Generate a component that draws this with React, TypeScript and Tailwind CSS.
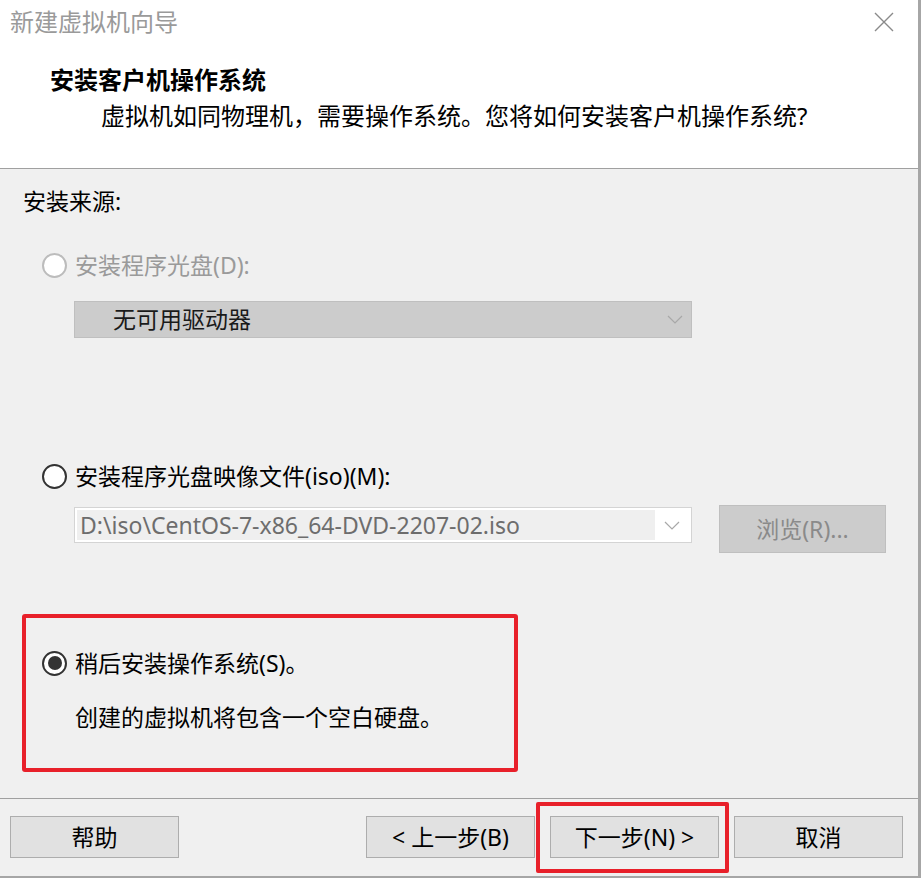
import React, { useState } from 'react';

const FONT = { fontFamily: '"Noto Sans", "Noto Sans CJK SC", sans-serif' };

const Radio = ({ checked, disabled }: { checked?: boolean; disabled?: boolean }) => (
  <span
    className={`w-[25px] h-[25px] rounded-full border-[2.5px] bg-white flex items-center justify-center shrink-0 ${
      disabled ? 'border-[#bcbcbc]' : 'border-[#333333]'
    }`}
  >
    {checked && <span className="w-[14px] h-[14px] rounded-full bg-[#333333]" />}
  </span>
);

const Chevron = () => (
  <svg width="16" height="9" viewBox="0 0 16 9" fill="none" stroke="#a8a8a8" strokeWidth="1.2">
    <path d="M1 1l7 7 7-7" />
  </svg>
);

const FooterButton = ({ children }: { children: React.ReactNode }) => (
  <button className="w-[169px] h-[42px] bg-[#e1e1e1] border border-[#adadad] text-[23px] text-black flex items-center justify-center leading-none">
    {children}
  </button>
);

export default function App() {
  const [source, setSource] = useState<'disc' | 'iso' | 'later'>('later');

  return (
    <div className="w-[922px] h-[881px] bg-white" style={FONT}>
      <div className="w-[921px] border-r-[3px] border-b-[2px] border-[#a6a6a6] flex flex-col">
        {/* 标题区 */}
        <div className="h-[169px] bg-white border-b border-[#a0a0a0] flex flex-col">
          <div className="h-[44px] flex items-center justify-between pl-[10px] pr-[24px]">
            <span className="text-[24px] text-[#9a9a9a] leading-none">新建虚拟机向导</span>
            <svg width="20" height="20" viewBox="0 0 20 20" stroke="#8a8a8a" strokeWidth="1.4">
              <path d="M1 1l18 18M19 1L1 19" />
            </svg>
          </div>
          <div className="pt-[18px] pl-[50px] text-[24px] font-bold leading-[36px] text-black">安装客户机操作系统</div>
          <div className="pl-[101px] text-[24px] leading-[36px] text-black">
            虚拟机如同物理机，需要操作系统。您将如何安装客户机操作系统?
          </div>
        </div>

        {/* 主体 */}
        <div className="h-[630px] bg-[#f0f0f0] border-b border-[#a0a0a0] pl-[23px] pt-[14px] flex flex-col text-[23px]">
          <div className="leading-[36px] text-black">安装来源:</div>

          <div className="mt-[28px] ml-[19px] h-[36px] flex items-center gap-[8px]">
            <Radio disabled />
            <span className="text-[#9a9a9a]">安装程序光盘(D):</span>
          </div>
          <div className="mt-[18px] ml-[51px] w-[618px] h-[37px] bg-[#cccccc] border border-[#bfbfbf] flex items-center justify-between pl-[38px] pr-[8px]">
            <span className="text-[#1a1a1a]">无可用驱动器</span>
            <Chevron />
          </div>

          <div
            className="mt-[120px] ml-[19px] h-[36px] flex items-center gap-[8px] cursor-default"
            onClick={() => setSource('iso')}
          >
            <Radio checked={source === 'iso'} />
            <span className="text-black">安装程序光盘映像文件(iso)(M):</span>
          </div>
          <div className="mt-[11px] ml-[51px] flex items-start gap-[27px]">
            <div className="mt-[2px] w-[618px] h-[36px] bg-white border border-[#d4d4d4] p-[2px] flex items-center">
              <div className="w-[578px] h-full bg-[#efefef] flex items-center pl-[3px] text-[#6d6d6d] whitespace-nowrap overflow-hidden">
                D:\iso\CentOS-7-x86_64-DVD-2207-02.iso
              </div>
              <div className="flex-1 flex justify-center">
                <Chevron />
              </div>
            </div>
            <button className="w-[167px] h-[48px] bg-[#cccccc] border border-[#bfbfbf] text-[#8a8a8a] flex items-center justify-center">
              浏览(R)...
            </button>
          </div>

          <div className="mt-[61px] ml-[-1px] w-[496px] h-[158px] border-[4px] border-[#e8202a] rounded-[3px] pl-[16px] pt-[27px] flex flex-col">
            <div className="h-[36px] flex items-center gap-[8px] cursor-default" onClick={() => setSource('later')}>
              <Radio checked={source === 'later'} />
              <span className="text-black">稍后安装操作系统(S)。</span>
            </div>
            <div className="mt-[18px] pl-[33px] leading-[36px] text-black">创建的虚拟机将包含一个空白硬盘。</div>
          </div>
        </div>

        {/* 底部按钮 */}
        <div className="h-[77px] bg-[#f0f0f0] pt-[17px] pl-[10px] flex items-start">
          <FooterButton>帮助</FooterButton>
          <div className="ml-[187px] flex gap-[15px]">
            <FooterButton>&lt; 上一步(B)</FooterButton>
            <div className="relative">
              <FooterButton>下一步(N) &gt;</FooterButton>
              <div className="absolute left-[-14px] top-[-14px] w-[193px] h-[71px] border-[4px] border-[#e8202a] rounded-[2px] pointer-events-none" />
            </div>
            <FooterButton>取消</FooterButton>
          </div>
        </div>
      </div>
    </div>
  );
}
